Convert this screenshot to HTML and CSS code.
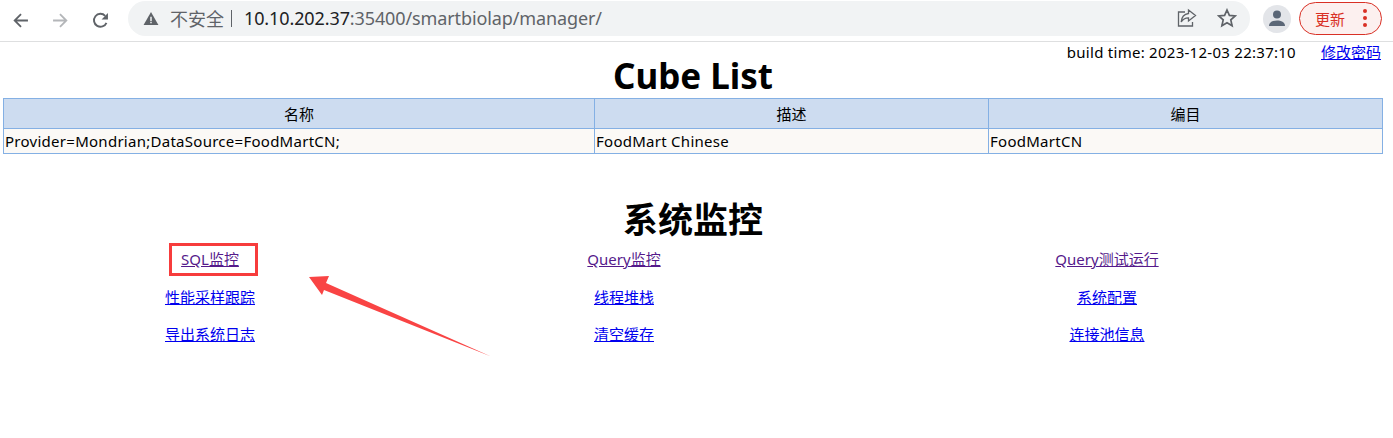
FILE: index.html
```html
<!DOCTYPE html>
<html lang="zh-CN">
<head>
  <meta charset="UTF-8">
  <title>Cube List</title>
  <link rel="stylesheet" href="styles.css">
</head>
<body>
  <!-- Barra del navegador -->
  <div class="toolbar">
    <svg class="nav-icon" viewBox="0 0 16 16"><path d="M15 8H2.500M8.500 2L2.500 8l6 6" fill="none" stroke="#5f6368" stroke-width="1.7"/></svg>
    <svg class="nav-icon forward" viewBox="0 0 16 16"><path d="M1 8h12.500M7.500 2l6 6-6 6" fill="none" stroke="#b4b6b9" stroke-width="1.7"/></svg>
    <svg class="nav-icon reload" viewBox="0 0 16 16"><path d="M13.600 10.200A6.100 6.100 0 1 1 12.400 3.600" fill="none" stroke="#5f6368" stroke-width="1.8"/><path d="M15 1v6h-6z" fill="#5f6368"/></svg>
    <div class="omnibox">
      <svg class="warn" viewBox="0 0 16 14"><path d="M8 0l8 14H0z" fill="#5f6368"/><path d="M7.200 5h1.600v4.600H7.200zM7.200 10.600h1.600v1.600H7.200z" fill="#f1f3f4"/></svg>
      <span class="insecure">不安全</span>
      <span class="sep"></span>
      <span class="url"><span class="host">10.10.202.37</span>:35400/smartbiolap/manager/</span>
      <svg class="omni-icon share" viewBox="0 0 20 20"><path d="M8 4H1.500v14h14v-4" fill="none" stroke="#5f6368" stroke-width="1.3"/><path d="M11.500 2l7 5.500-7 5.500V9.800C8 9.800 5.800 11 4.200 14c.4-4.800 3-8 7.300-8.500z" fill="none" stroke="#5f6368" stroke-width="1.3"/></svg>
      <svg class="omni-icon star" viewBox="0 0 20 20"><path d="M10 2l2.400 5.400 5.800.6-4.400 3.900 1.300 5.800L10 14.700l-5.100 3 1.300-5.800L1.800 8l5.800-.6z" fill="none" stroke="#5f6368" stroke-width="1.7"/></svg>
    </div>
    <div class="avatar">
      <svg viewBox="0 0 28 28"><circle cx="14" cy="9.500" r="4" fill="#5b6777"/><path d="M6 21c0-4 4-5.500 8-5.500s8 1.500 8 5.500z" fill="#5b6777"/></svg>
    </div>
    <div class="update">
      <span>更新</span>
      <span class="dots"><i></i><i></i><i></i></span>
    </div>
  </div>

  <!-- Contenido -->
  <div class="page">
    <div class="build">
      <span class="latino">build time: 2023-12-03 22:37:10</span>
      <a href="#">修改密码</a>
    </div>
    <h1 class="titulo-cube">Cube List</h1>
    <table class="cubos">
      <tr>
        <th class="col-nombre">名称</th>
        <th class="col-desc">描述</th>
        <th>编目</th>
      </tr>
      <tr>
        <td>Provider=Mondrian;DataSource=FoodMartCN;</td>
        <td>FoodMart Chinese</td>
        <td>FoodMartCN</td>
      </tr>
    </table>

    <h1 class="titulo-monitor">系统监控</h1>
    <div class="enlaces">
      <a class="visitado" href="#">SQL监控</a>
      <a class="visitado" href="#">Query监控</a>
      <a class="visitado" href="#">Query测试运行</a>
      <a href="#">性能采样跟踪</a>
      <a href="#">线程堆栈</a>
      <a href="#">系统配置</a>
      <a href="#">导出系统日志</a>
      <a href="#">清空缓存</a>
      <a href="#">连接池信息</a>
    </div>
  </div>

  <!-- Anotaciones -->
  <div class="marco"></div>
  <svg class="flecha" viewBox="0 0 190 85"><path d="M1 2l20-1-3 7 165 73.500L16 15l-2 5z" fill="#f94444"/></svg>
</body>
</html>
```

FILE: styles.css
```css
body {
  margin: 0;
  height: 438px;
  overflow: hidden;
  position: relative;
  background: #fff;
  font-family: "Noto Sans", "Noto Sans CJK SC", sans-serif;
  font-size: 15px;
  color: #000;
}

.toolbar {
  height: 41px;
  border-bottom: 1px solid #dedfe0;
  display: flex;
  align-items: center;
  padding-left: 12px;
}

.nav-icon {
  width: 17px;
  height: 17px;
  margin-right: 23px;
  flex: none;
}

.nav-icon.reload {
  margin-right: 19px;
}

.omnibox {
  flex: none;
  width: 1122px;
  height: 35px;
  margin-top: -5px;
  border-radius: 18px;
  background: #f1f3f4;
  display: flex;
  align-items: center;
  padding-left: 15px;
  box-sizing: border-box;
}

.warn {
  width: 16px;
  height: 13px;
  margin-right: 11px;
}

.insecure {
  font-size: 18px;
  color: #5f6368;
}

.sep {
  width: 1px;
  height: 17px;
  background: #5f6368;
  margin: 0 12px 0 7px;
}

.url {
  font-size: 18px;
  letter-spacing: -0.11px;
  color: #5f6368;
  flex: 1;
}

.host {
  color: #202124;
}

.omni-icon {
  width: 20px;
  height: 20px;
  flex: none;
}

.share {
  margin-right: 20px;
}

.star {
  margin-right: 13px;
}

.avatar {
  flex: none;
  width: 28px;
  height: 28px;
  margin: -4px 0 0 13px;
  border-radius: 50%;
  background: #e3e5e9;
}

.update {
  flex: none;
  width: 83px;
  height: 33px;
  margin: -5px 0 0 8px;
  box-sizing: border-box;
  border: 1px solid #d93025;
  border-radius: 17px;
  background: #fcf0ef;
  color: #d93025;
  font-size: 15px;
  display: flex;
  align-items: center;
  padding-left: 15px;
}

.dots {
  display: flex;
  flex-direction: column;
  gap: 3px;
  margin-left: 18px;
}

.dots i {
  width: 4px;
  height: 4px;
  border-radius: 50%;
  background: #d93025;
}

.build {
  display: flex;
  justify-content: flex-end;
  gap: 25px;
  padding-right: 12px;
  height: 16px;
  line-height: 20px;
}

.latino {
  letter-spacing: 0.27px;
}

a {
  color: #0000ee;
}

a.visitado {
  color: #551a8b;
}

h1 {
  margin: 0;
  padding-right: 7px;
  text-align: center;
  font-size: 35px;
  font-weight: bold;
  line-height: 36px;
}

.titulo-cube {
  height: 40px;
}

.cubos {
  width: 1380px;
  margin-left: 3px;
  border-collapse: collapse;
  table-layout: fixed;
}

.cubos th,
.cubos td {
  border: 1px solid #84b0e4;
  font-size: 15px;
  padding: 0 1px;
}

.cubos th {
  height: 29px;
  font-weight: normal;
  background: #cddcf0;
  text-align: center;
}

.cubos td {
  height: 24px;
  background: #fbf9f6;
  letter-spacing: 0.27px;
}

.col-nombre {
  width: 588px;
}

.col-desc {
  width: 391px;
}

.titulo-monitor {
  margin-top: 48px;
}

.enlaces {
  display: grid;
  grid-template-columns: 414px 414px 552px;
  grid-auto-rows: 37.500px;
  margin: 2px 0 0 3px;
  justify-items: center;
  align-items: center;
}

.marco {
  position: absolute;
  left: 169px;
  top: 243px;
  width: 89px;
  height: 33px;
  box-sizing: border-box;
  border: 3px solid #f73c3c;
}

.flecha {
  position: absolute;
  left: 308px;
  top: 275px;
  width: 190px;
  height: 85px;
}
```
